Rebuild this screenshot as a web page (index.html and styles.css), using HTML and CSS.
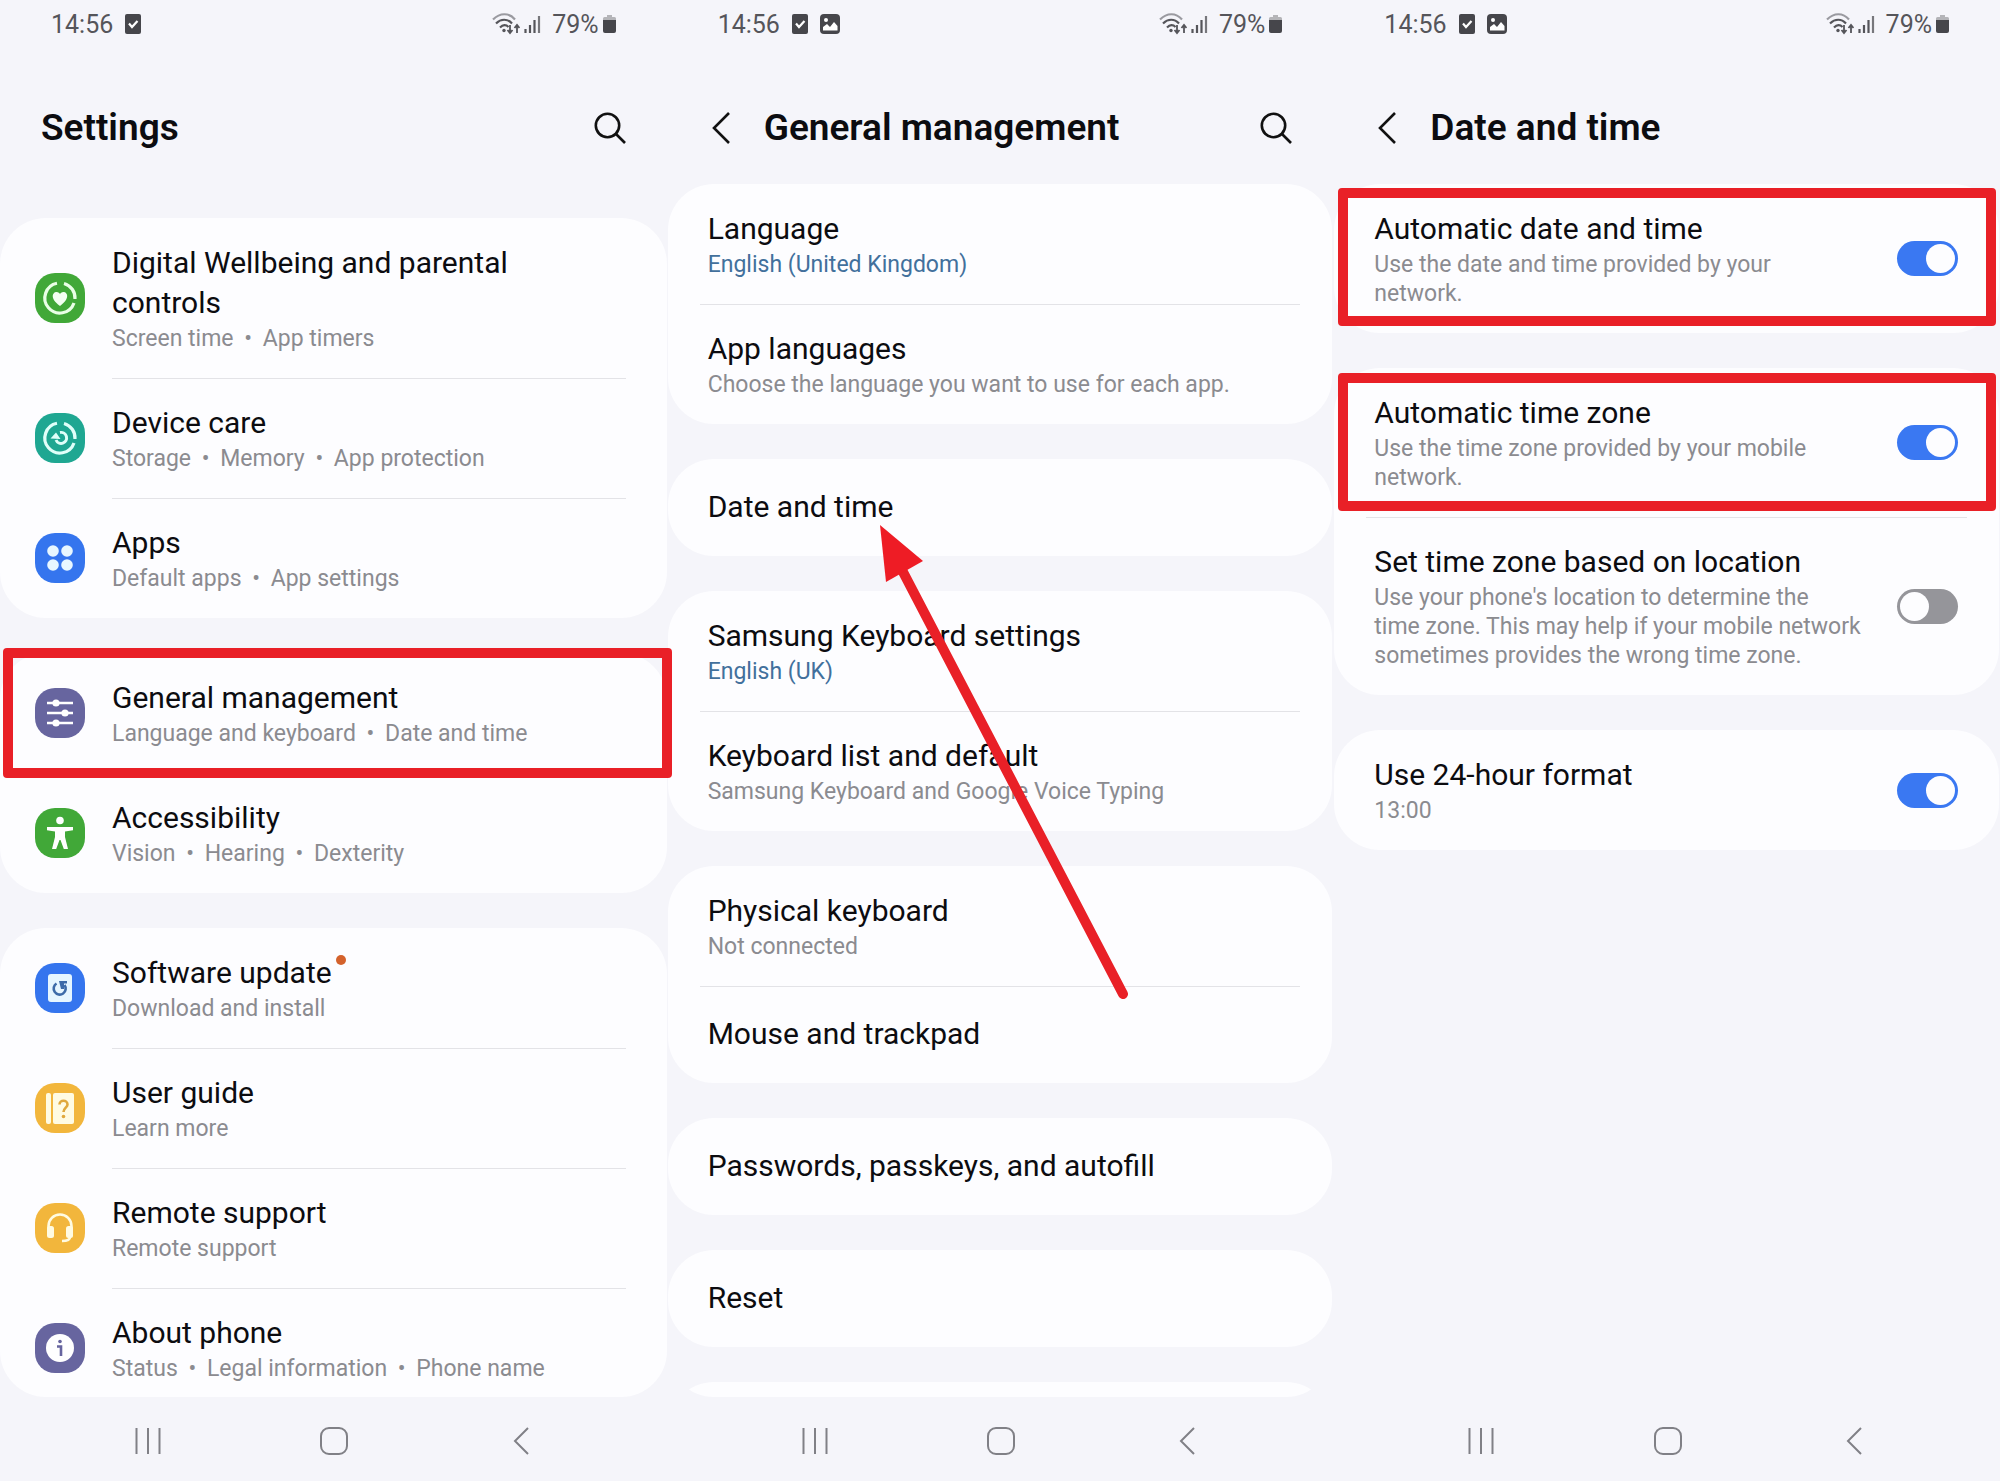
FILE: index.html
```
<!DOCTYPE html>
<html lang="en">
<head>
<meta charset="utf-8">
<title>Settings</title>
<link rel="stylesheet" href="styles.css">
</head>
<body>
<svg class="sprite" aria-hidden="true">
  <symbol id="i-task" viewBox="0 0 16 20"><rect width="16" height="20" rx="2" fill="#46464b"/><path d="M4 9.500l3 3.500 5.500-6" fill="none" stroke="#fff" stroke-width="2.200"/></symbol>
  <symbol id="i-image" viewBox="0 0 20 20"><rect width="20" height="20" rx="4" fill="#46464b"/><circle cx="6" cy="6" r="2" fill="#fff"/><path d="M3 16.500v-3.500l4-3 3 3 4-5 3.500 4v4.500z" fill="#fff"/></symbol>
  <symbol id="i-wifi" viewBox="0 0 28 22"><g fill="none" stroke="#55555a" stroke-width="2.200"><path d="M1 6.500C8-.5 17-.5 23 6.500" stroke="#9a9aa0"/><path d="M4 10.500c5-5 11.500-5 16 0M8 14.500c3-3 6-3 8.500-.5"/><path d="M18 12v8m-2.500-3l2.500 3 2.500-3M25 20v-8m-2.500 3l2.500-3 2.500 3" stroke-width="1.800"/></g><circle cx="12" cy="17.500" r="1.700" fill="#55555a"/></symbol>
  <symbol id="i-signal" viewBox="0 0 17 20"><path d="M1.500 15v4M6 11v8M10.500 6v13" stroke="#55555a" stroke-width="2.200"/><path d="M15 2v17" stroke="#77777c" stroke-width="2.200"/></symbol>
  <symbol id="i-battery" viewBox="0 0 13 20"><path d="M4 1h5v2h2.500a1.500 1.500 0 0 1 1.500 1.500V7H0V4.500A1.500 1.500 0 0 1 1.500 3H4z" fill="#b4b4b8"/><path d="M0 6h13v11a2 2 0 0 1-2 2H2a2 2 0 0 1-2-2z" fill="#46464b"/></symbol>
  <symbol id="i-search" viewBox="0 0 32 32"><g fill="none" stroke="#111" stroke-width="2.600"><circle cx="13.500" cy="13.500" r="11.700"/><path d="M22 22l9 9"/></g></symbol>
  <symbol id="i-back" viewBox="0 0 18 32"><path d="M17 1L2 16l15 15" fill="none" stroke="#111" stroke-width="2.600"/></symbol>
  <symbol id="i-recents" viewBox="0 0 26 26"><path d="M1.500 0v26M13 0v26M24.500 0v26" stroke="#808086" stroke-width="2"/></symbol>
  <symbol id="i-home" viewBox="0 0 28 28"><rect x="1" y="1" width="26" height="26" rx="8" fill="none" stroke="#808086" stroke-width="2"/></symbol>
  <symbol id="i-prev" viewBox="0 0 16 28"><path d="M15 1L2 14l13 13" fill="none" stroke="#808086" stroke-width="2"/></symbol>
</svg>

<main class="screens">
  <section class="screen" aria-label="Settings">
    <div class="status">
      <span>14:56</span><svg class="s-task"><use href="#i-task"/></svg>
      <span class="status-right"><svg class="s-wifi"><use href="#i-wifi"/></svg><svg class="s-signal"><use href="#i-signal"/></svg><span>79%</span><svg class="s-battery"><use href="#i-battery"/></svg></span>
    </div>
    <header class="bar bar-home">
      <h1>Settings</h1>
      <button class="icon-btn" aria-label="Search"><svg class="b-search"><use href="#i-search"/></svg></button>
    </header>
    <div class="list">
      <div class="card">
        <a class="row" href="#"><svg class="app" viewBox="0 0 50 50"><rect width="50" height="50" rx="20" fill="#41a838"/><g fill="none" stroke="#e9ffe6" stroke-width="3.200"><path d="M22 10.300A15 15 0 1 0 39 30M29 10.500A15 15 0 0 1 40 26"/></g><path d="M25 33c-11-8-7-14-3.500-14 2 0 3 1 3.500 2.200.5-1.200 1.500-2.200 3.500-2.200 3.500 0 7.500 6-3.500 14z" fill="#f4fff2"/></svg><span class="text"><span class="title">Digital Wellbeing and parental controls</span><span class="sub">Screen time <i>•</i> App timers</span></span></a>
        <a class="row" href="#"><svg class="app" viewBox="0 0 50 50"><rect width="50" height="50" rx="20" fill="#1fa792"/><g fill="none" stroke="#e0fff9" stroke-width="3.200"><path d="M22 10.300A15 15 0 1 0 39 30M29 10.500A15 15 0 0 1 40 26"/><path d="M21 27a5.500 5.500 0 1 0 4-7.500" stroke-width="3"/></g><path d="M15.500 25.500l5.500-6 4.500 6.500z" fill="#e0fff9"/></svg><span class="text"><span class="title">Device care</span><span class="sub">Storage <i>•</i> Memory <i>•</i> App protection</span></span></a>
        <a class="row" href="#"><svg class="app" viewBox="0 0 50 50"><rect width="50" height="50" rx="20" fill="#3575ee"/><g fill="#e8f7ff"><circle cx="18" cy="18" r="5.800"/><circle cx="32" cy="18" r="5.800"/><circle cx="18" cy="32" r="5.800"/><circle cx="32" cy="32" r="5.800"/></g></svg><span class="text"><span class="title">Apps</span><span class="sub">Default apps <i>•</i> App settings</span></span></a>
      </div>
      <div class="card">
        <a class="row plain" href="#"><svg class="app" viewBox="0 0 50 50"><rect width="50" height="50" rx="20" fill="#67659f"/><path d="M12 15h26M12 25h26M12 35h26" stroke="#fff" stroke-width="2.600"/><g fill="#fff"><circle cx="21" cy="15" r="3.600"/><circle cx="30" cy="25" r="3.600"/><circle cx="21" cy="35" r="3.600"/></g></svg><span class="text"><span class="title">General management</span><span class="sub">Language and keyboard <i>•</i> Date and time</span></span></a>
        <a class="row plain" href="#"><svg class="app" viewBox="0 0 50 50"><rect width="50" height="50" rx="20" fill="#41a838"/><circle cx="25" cy="12.500" r="3.800" fill="#fff"/><path d="M12 19h26v3.200l-8 1.300V29l3 12h-4.200L25.500 32h-1L21.200 41H17l3-12v-5.500l-8-1.300z" fill="#fff"/></svg><span class="text"><span class="title">Accessibility</span><span class="sub">Vision <i>•</i> Hearing <i>•</i> Dexterity</span></span></a>
      </div>
      <div class="card">
        <a class="row" href="#"><svg class="app" viewBox="0 0 50 50"><rect width="50" height="50" rx="20" fill="#3575ee"/><rect x="13" y="11" width="24" height="28" rx="3" fill="#e6f6ff"/><path d="M21.500 20.500a6 6 0 1 0 8 1.500" fill="none" stroke="#3d6ba8" stroke-width="2.600"/><path d="M24 18h8v2.600h-3V26h-3z" fill="#3d6ba8"/></svg><span class="text"><span class="title">Software update<b class="dot"></b></span><span class="sub">Download and install</span></span></a>
        <a class="row" href="#"><svg class="app" viewBox="0 0 50 50"><rect width="50" height="50" rx="20" fill="#f2b63c"/><rect x="11" y="10" width="5" height="31" rx="2" fill="#fffbe2"/><rect x="18" y="10" width="21" height="31" rx="2" fill="#fffbe2"/><path d="M24.500 21.500c0-5 8-5 8 0 0 3-4 3.500-4 7.500" fill="none" stroke="#e0a83c" stroke-width="2.600"/><circle cx="28.500" cy="33.500" r="1.800" fill="#e0a83c"/></svg><span class="text"><span class="title">User guide</span><span class="sub">Learn more</span></span></a>
        <a class="row" href="#"><svg class="app" viewBox="0 0 50 50"><rect width="50" height="50" rx="20" fill="#f2b63c"/><path d="M13.500 27v-4a11.500 11.500 0 0 1 23 0v4M35 34c0 3-3 4-8 4" fill="none" stroke="#fffbe2" stroke-width="2.600"/><rect x="12" y="23" width="7" height="12" rx="2.500" fill="#fffbe2"/><rect x="31" y="23" width="7" height="12" rx="2.500" fill="#fffbe2"/></svg><span class="text"><span class="title">Remote support</span><span class="sub">Remote support</span></span></a>
        <a class="row" href="#"><svg class="app" viewBox="0 0 50 50"><rect width="50" height="50" rx="20" fill="#67659f"/><circle cx="25" cy="25" r="14" fill="#fff"/><circle cx="25" cy="18.500" r="1.800" fill="#67659f"/><path d="M22 23.500h4V33" fill="none" stroke="#67659f" stroke-width="2.600"/></svg><span class="text"><span class="title">About phone</span><span class="sub">Status <i>•</i> Legal information <i>•</i> Phone name</span></span></a>
      </div>
    </div>
    <nav class="nav"><button class="icon-btn" aria-label="Recent apps"><svg class="n-recents"><use href="#i-recents"/></svg></button><button class="icon-btn" aria-label="Home"><svg class="n-home"><use href="#i-home"/></svg></button><button class="icon-btn" aria-label="Back"><svg class="n-prev"><use href="#i-prev"/></svg></button></nav>
    <div class="mark mark-general"></div>
  </section>

  <section class="screen inset" aria-label="General management">
    <div class="status">
      <span>14:56</span><svg class="s-task"><use href="#i-task"/></svg><svg class="s-image"><use href="#i-image"/></svg>
      <span class="status-right"><svg class="s-wifi"><use href="#i-wifi"/></svg><svg class="s-signal"><use href="#i-signal"/></svg><span>79%</span><svg class="s-battery"><use href="#i-battery"/></svg></span>
    </div>
    <header class="bar">
      <button class="icon-btn" aria-label="Back"><svg class="b-back"><use href="#i-back"/></svg></button>
      <h1>General management</h1>
      <button class="icon-btn" aria-label="Search"><svg class="b-search"><use href="#i-search"/></svg></button>
    </header>
    <div class="list">
      <div class="card">
        <a class="row" href="#"><span class="text"><span class="title">Language</span><span class="sub value">English (United Kingdom)</span></span></a>
        <a class="row" href="#"><span class="text"><span class="title">App languages</span><span class="sub">Choose the language you want to use for each app.</span></span></a>
      </div>
      <div class="card">
        <a class="row single" href="#"><span class="text"><span class="title">Date and time</span></span></a>
      </div>
      <div class="card">
        <a class="row" href="#"><span class="text"><span class="title">Samsung Keyboard settings</span><span class="sub value">English (UK)</span></span></a>
        <a class="row" href="#"><span class="text"><span class="title">Keyboard list and default</span><span class="sub">Samsung Keyboard and Google Voice Typing</span></span></a>
      </div>
      <div class="card">
        <a class="row" href="#"><span class="text"><span class="title">Physical keyboard</span><span class="sub">Not connected</span></span></a>
        <a class="row single" href="#"><span class="text"><span class="title">Mouse and trackpad</span></span></a>
      </div>
      <div class="card">
        <a class="row single" href="#"><span class="text"><span class="title">Passwords, passkeys, and autofill</span></span></a>
      </div>
      <div class="card">
        <a class="row single" href="#"><span class="text"><span class="title">Reset</span></span></a>
      </div>
      <div class="card card-next"></div>
    </div>
    <nav class="nav"><button class="icon-btn" aria-label="Recent apps"><svg class="n-recents"><use href="#i-recents"/></svg></button><button class="icon-btn" aria-label="Home"><svg class="n-home"><use href="#i-home"/></svg></button><button class="icon-btn" aria-label="Back"><svg class="n-prev"><use href="#i-prev"/></svg></button></nav>
    <svg class="arrow" viewBox="0 0 250 480" aria-hidden="true"><path d="M22 45L243 469" stroke="#e92027" stroke-width="10" stroke-linecap="round"/><path d="M0 0L43 36 6 57z" fill="#ee1c25"/></svg>
  </section>

  <section class="screen inset" aria-label="Date and time">
    <div class="status">
      <span>14:56</span><svg class="s-task"><use href="#i-task"/></svg><svg class="s-image"><use href="#i-image"/></svg>
      <span class="status-right"><svg class="s-wifi"><use href="#i-wifi"/></svg><svg class="s-signal"><use href="#i-signal"/></svg><span>79%</span><svg class="s-battery"><use href="#i-battery"/></svg></span>
    </div>
    <header class="bar">
      <button class="icon-btn" aria-label="Back"><svg class="b-back"><use href="#i-back"/></svg></button>
      <h1>Date and time</h1>
    </header>
    <div class="list">
      <div class="card">
        <label class="row"><span class="text"><span class="title">Automatic date and time</span><span class="sub">Use the date and time provided by your<br>network.</span></span><input class="switch" type="checkbox" checked></label>
      </div>
      <div class="card">
        <label class="row"><span class="text"><span class="title">Automatic time zone</span><span class="sub">Use the time zone provided by your mobile<br>network.</span></span><input class="switch" type="checkbox" checked></label>
        <label class="row"><span class="text"><span class="title">Set time zone based on location</span><span class="sub">Use your phone's location to determine the<br>time zone. This may help if your mobile network<br>sometimes provides the wrong time zone.</span></span><input class="switch" type="checkbox"></label>
      </div>
      <div class="card">
        <label class="row"><span class="text"><span class="title">Use 24-hour format</span><span class="sub">13:00</span></span><input class="switch" type="checkbox" checked></label>
      </div>
    </div>
    <nav class="nav"><button class="icon-btn" aria-label="Recent apps"><svg class="n-recents"><use href="#i-recents"/></svg></button><button class="icon-btn" aria-label="Home"><svg class="n-home"><use href="#i-home"/></svg></button><button class="icon-btn" aria-label="Back"><svg class="n-prev"><use href="#i-prev"/></svg></button></nav>
    <div class="mark mark-date"></div>
    <div class="mark mark-zone"></div>
  </section>
</main>
</body>
</html>
```
FILE: styles.css
```
* { box-sizing: border-box; }
body { margin: 0; background: #f5f5fa; color: #0c0c10; font-family: Roboto, "Noto Sans", sans-serif; }
svg { display: block; flex: none; }
.sprite { position: absolute; width: 0; height: 0; }

.screens { display: grid; grid-template-columns: repeat(3, 1fr); }
.screen { position: relative; display: flex; flex-direction: column; height: 100vh; min-width: 0; }

.status { display: flex; align-items: center; height: 48px; padding: 0 51px; gap: 12px; font-size: 25px; color: #55555a; }
.status-right { display: flex; align-items: center; margin-left: auto; gap: 4px; }
.s-task { width: 16px; height: 20px; }
.s-image { width: 20px; height: 20px; }
.s-wifi { width: 28px; height: 22px; }
.s-signal { width: 17px; height: 20px; margin-right: 7px; }
.s-battery { width: 13px; height: 20px; }

.bar { display: flex; align-items: center; height: 136px; padding: 24px 41px 0 45px; gap: 34px; }
.bar-home { height: 170px; padding: 0 41px 10px 41px; }
.bar h1 { flex: 1; margin: 0; font-size: 37px; line-height: 44px; font-weight: 600; }
.icon-btn { display: flex; justify-content: center; padding: 0; border: 0; background: none; cursor: pointer; }
.b-search { width: 32px; height: 32px; }
.b-back { width: 18px; height: 32px; }

.list { display: flex; flex: 1; flex-direction: column; gap: 35px; min-height: 0; overflow: hidden; border-radius: 0 0 46px 46px; }
.inset .list { margin: 0 1px; }
.card { flex: none; border-radius: 46px; background: #fdfdff; }
.card-next { height: 97px; }

.row { display: flex; align-items: center; gap: 27px; padding: 25px 64px 25px 35px; color: inherit; text-decoration: none; background: linear-gradient(#e3e3e7, #e3e3e7) no-repeat 112px 0 / calc(100% - 153px) 1px; }
.inset .row { gap: 24px; padding: 25px 41px 25px 40px; background-position: 32px 0; background-size: calc(100% - 64px) 1px; }
.inset .single { padding: 28px 41px 29px 40px; }
.row:first-child, .plain { background: none; }
.inset .row:first-child { background: none; }
.app { width: 50px; height: 50px; }
.text { display: flex; flex: 1; flex-direction: column; gap: 1px; }
.title { font-size: 30px; line-height: 40px; }
.sub { font-size: 23px; line-height: 29px; color: #8b8b90; }
.sub i { margin: 0 5px; font-style: normal; }
.value { color: #42709c; }
.dot { display: inline-block; width: 10px; height: 10px; margin-left: 4px; border-radius: 50%; background: #d4622c; vertical-align: 18px; }

.switch { appearance: none; flex: none; display: flex; width: 61px; height: 35px; margin: 0; padding: 3px; border-radius: 18px; background: #95959a; }
.switch::before { content: ""; width: 29px; height: 29px; border-radius: 50%; background: #fdfdff; }
.switch:checked { justify-content: flex-end; background: #3a78f2; }

.nav { display: flex; align-items: center; justify-content: space-between; height: 84px; padding: 4px 132px 0 134px; }
.nav .icon-btn { width: 28px; }
.n-recents { width: 26px; height: 26px; }
.n-home { width: 28px; height: 28px; }
.n-prev { width: 16px; height: 28px; }

.mark { position: absolute; z-index: 1; border: 10px solid #e92027; border-radius: 4px; pointer-events: none; }
.mark-general { top: 648px; left: 3px; right: -5px; height: 130px; }
.mark-date { top: 188px; left: 5px; right: 4px; height: 138px; }
.mark-zone { top: 373px; left: 5px; right: 4px; height: 138px; }
.arrow { position: absolute; top: 525px; left: 213px; width: 250px; height: 480px; pointer-events: none; }
```
